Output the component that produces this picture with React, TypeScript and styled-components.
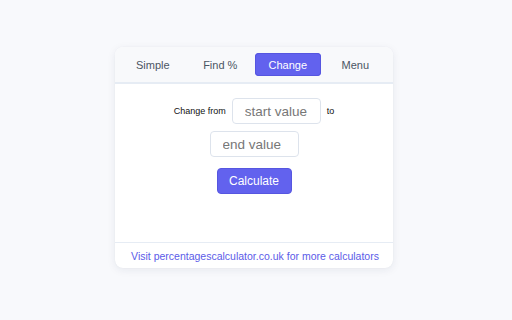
import styled, { createGlobalStyle } from 'styled-components'

const GlobalStyle = createGlobalStyle`
  html, body {
    margin: 0;
    padding: 0;
    background: #f8f9fc;
    font-family: 'Liberation Sans', Arial, sans-serif;
  }
`

const tabs = ['Simple', 'Find %', 'Change', 'Menu']

function App() {
  return (
    <Page>
      <GlobalStyle />
      <Card>
        <TabBar>
          {tabs.map((t) => (
            <Tab key={t} $active={t === 'Change'}>
              {t}
            </Tab>
          ))}
        </TabBar>
        <Body>
          <Form>
            <Label>Change from</Label>
            <Field placeholder="start value" />
            <Label>to</Label>
            <Field placeholder="end value" />
          </Form>
          <Button>Calculate</Button>
        </Body>
        <Footer>
          <FooterLink>Visit percentagescalculator.co.uk for more calculators</FooterLink>
        </Footer>
      </Card>
    </Page>
  )
}

const Page = styled.div`
  width: 512px;
  height: 320px;
  display: flex;
  justify-content: center;
  padding: 47px 4px 0 0;
  box-sizing: border-box;
`

const Card = styled.div`
  width: 278px;
  height: 221px;
  background: #ffffff;
  border-radius: 8px;
  box-shadow: 0 2px 8px rgba(30, 40, 80, 0.08), 0 0 1px rgba(30, 40, 80, 0.08);
  display: flex;
  flex-direction: column;
  overflow: hidden;
`

const TabBar = styled.div`
  display: grid;
  grid-template-columns: repeat(4, 1fr);
  gap: 2px;
  padding: 6px 5px 6px;
  background: #f8f9fb;
  border-bottom: 2px solid #e6ecf4;
`

const Tab = styled.div<{ $active?: boolean }>`
  height: 23px;
  display: flex;
  align-items: center;
  justify-content: center;
  border-radius: 4px;
  font-size: 11px;
  color: ${(p) => (p.$active ? '#ffffff' : '#4b5563')};
  background: ${(p) => (p.$active ? '#6262ee' : 'transparent')};
  box-shadow: ${(p) => (p.$active ? 'inset 0 0 0 1px #5656e0' : 'none')};
`

const Body = styled.div`
  flex: 1;
  display: flex;
  flex-direction: column;
  align-items: center;
  padding-top: 14px;
`

const Form = styled.div`
  width: 200px;
  display: flex;
  flex-wrap: wrap;
  justify-content: center;
  align-items: center;
  column-gap: 6px;
  row-gap: 7px;
`

const Label = styled.span`
  font-size: 9px;
  color: #111111;
`

const Field = styled.input`
  width: 89px;
  height: 26px;
  box-sizing: border-box;
  border: 1px solid #dde3ec;
  border-radius: 4px;
  padding: 0 0 0 12px;
  font-family: 'Liberation Sans', Arial, sans-serif;
  font-size: 13.5px;
  color: #333333;
  outline: none;

  &::placeholder {
    color: #777777;
  }
`

const Button = styled.div`
  margin-top: 11px;
  width: 75px;
  height: 26px;
  box-sizing: border-box;
  display: flex;
  align-items: center;
  justify-content: center;
  border-radius: 4px;
  background: #6262ee;
  border: 1px solid #5656e0;
  color: #ffffff;
  font-size: 12px;
`

const Footer = styled.div`
  height: 25px;
  border-top: 1px solid #e6ecf4;
  display: flex;
  align-items: center;
  justify-content: center;
  padding-left: 2px;
`

const FooterLink = styled.span`
  font-size: 10.5px;
  color: #5b5be8;
`

export default App
